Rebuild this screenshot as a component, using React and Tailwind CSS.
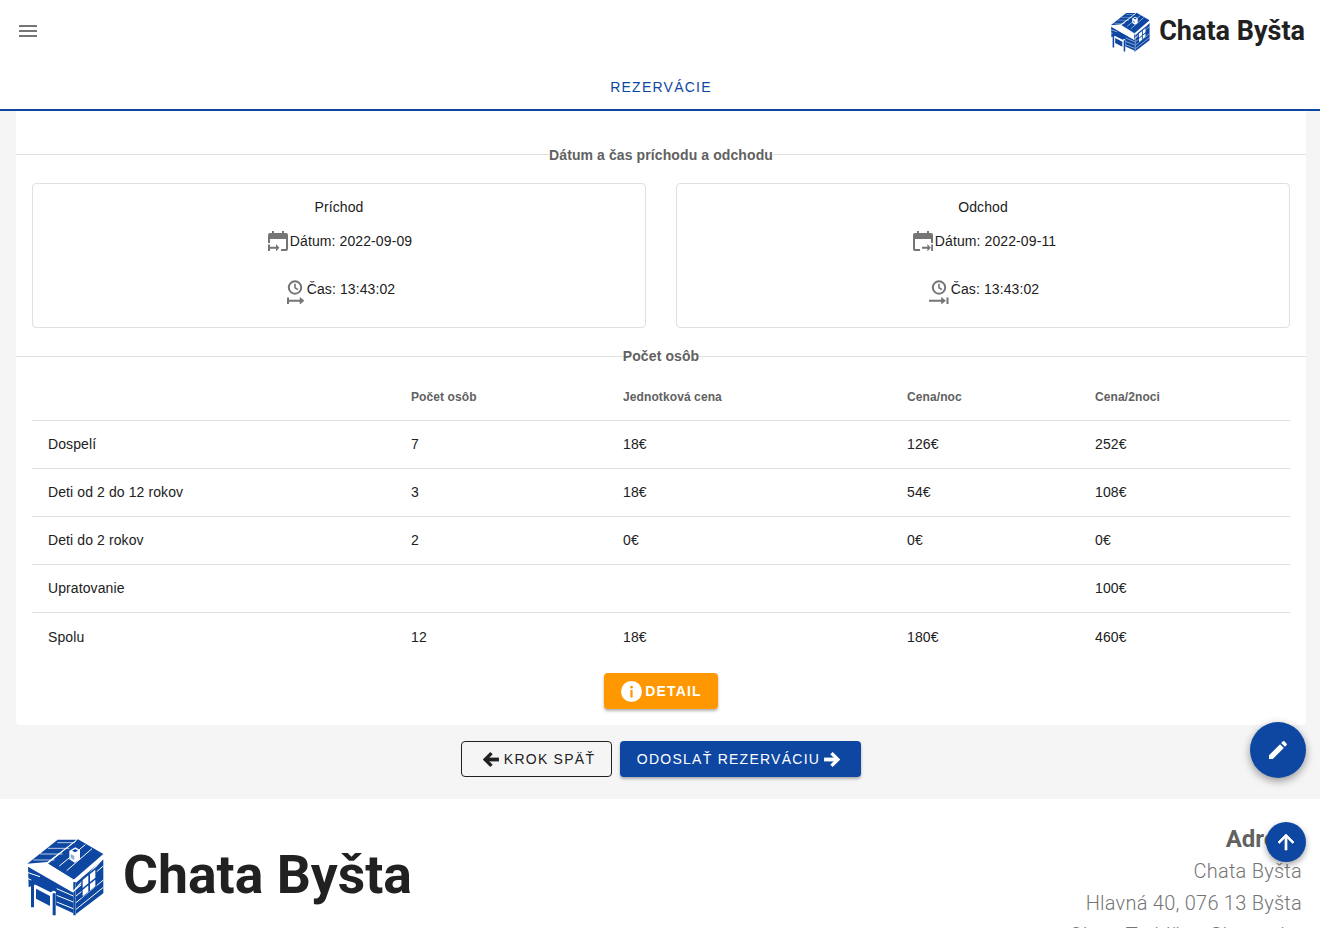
import React from "react";

const sans = "font-['Liberation_Sans',Arial,sans-serif]";
const roboto = "font-['Roboto',sans-serif]";

const rows = [
  { name: "Dospelí", count: "7", unit: "18€", night: "126€", total: "252€" },
  { name: "Deti od 2 do 12 rokov", count: "3", unit: "18€", night: "54€", total: "108€" },
  { name: "Deti do 2 rokov", count: "2", unit: "0€", night: "0€", total: "0€" },
  { name: "Upratovanie", count: "", unit: "", night: "", total: "100€" },
  { name: "Spolu", count: "12", unit: "18€", night: "180€", total: "460€" },
];

// the cabin logo, drawn on a 270 grid
const Logo = ({ className }) => (
  <svg viewBox="0 0 270 270" className={className}>
    <path fill="#0d47a1" d="M22 101 113 29H170L82 96Z" />
    <path fill="#0d47a1" d="M174 28 250 72 160 150 84 101Z" />
    <path fill="#0d47a1" d="M24 110 160 188V250L108 226V186L62 156 26 172Z" />
    <path fill="#0d47a1" d="M168 158 250 88V190L168 252Z" />
    <path fill="#0d47a1" d="M30 156 62 140 122 170 92 187Z" />
    <path fill="#0d47a1" d="M48 176 90 198V228L48 206Z" />
    <path fill="#0d47a1" d="M33 165H42V232H33ZM98 190H107V256H98ZM160 156H167V256H160Z" />
    <g stroke="#fff" strokeWidth="3" fill="none">
      <path d="M40 90H104M60 72H128M84 55H148M112 38H165" opacity=".7" />
      <path d="M168 32 80 100 162 150M196 44 118 108M216 56 140 122" />
      <path d="M22 104 160 184 252 82" strokeWidth="4" />
      <path d="M24 128 60 140M24 146 34 150M110 176 160 198M110 196 160 216M110 216 160 236" />
      <path d="M168 178 250 108M168 198 190 180M168 218 250 150M168 238 250 172" />
    </g>
    <path fill="#fff" d="M148 62 166 52 180 60V88L164 98 148 88Z" />
    <path fill="#0d47a1" d="M156 62 166 57 174 62 165 67Z" />
    <path fill="#0d47a1" d="M152 72 163 78V90L152 84Z" opacity=".45" />
    <path fill="#0d47a1" d="M184 146 230 110V168L184 204Z" />
    <path fill="#fff" d="M188 150 205 136V160L188 174ZM210 132 226 119V143L210 156ZM188 180 205 166V186L188 199ZM210 162 226 149V169L210 182Z" />
  </svg>
);

// calendar with a small arrow in its lower corner
const CalendarArrival = () => (
  <svg viewBox="0 0 20 20" className="w-5 h-5 shrink-0" fill="#757575">
    <path d="M4 0h2v2h8V0h2v2h2a2 2 0 0 1 2 2v4H0V4a2 2 0 0 1 2-2h2Z" />
    <path d="M0 8h2v4H0ZM18 8h2v10a2 2 0 0 1-2 2h-5v-2h5Z" />
    <path d="M0 13.5h2V20H0ZM2 15.7h6V13l3.4 3.7L8 20.4v-2.7H2Z" />
  </svg>
);

const CalendarDeparture = () => (
  <svg viewBox="0 0 20 20" className="w-5 h-5 shrink-0" fill="#757575">
    <path d="M4 0h2v2h8V0h2v2h2a2 2 0 0 1 2 2v4H0V4a2 2 0 0 1 2-2h2Z" />
    <path d="M0 8h2v10h5v2H2a2 2 0 0 1-2-2ZM18 8h2v4h-2Z" />
    <path d="M18.2 13.5h2V20h-2ZM9 15.7h5.4V13l3.4 3.7-3.4 3.7v-2.7H9Z" />
  </svg>
);

const ClockArrival = () => (
  <svg viewBox="0 0 20 24" className="w-5 h-6 shrink-0 translate-y-[3px]" fill="none" stroke="#757575">
    <circle cx="10" cy="7.5" r="6.2" strokeWidth="2" />
    <path d="M10 3.8v4l3 1.8" strokeWidth="1.6" />
    <path d="M3 17.5v6.5M3 20.7h13" strokeWidth="2" />
    <path d="M15 17.5v6.4l4-3.2Z" fill="#757575" strokeWidth="0.6" />
  </svg>
);

const ClockDeparture = () => (
  <svg viewBox="0 0 20 24" className="w-5 h-6 shrink-0 translate-y-[3px]" fill="none" stroke="#757575">
    <circle cx="10" cy="7.5" r="6.2" strokeWidth="2" />
    <path d="M10 3.8v4l3 1.8" strokeWidth="1.6" />
    <path d="M18.5 17.5v6.5M0 20.7h13" strokeWidth="2" />
    <path d="M12.5 17.5v6.4l4-3.2Z" fill="#757575" strokeWidth="0.6" />
  </svg>
);

const ThickArrow = ({ left }) => (
  <svg viewBox="0 0 16 16" className={left ? "w-[17px] h-[17px] rotate-180" : "w-[17px] h-[17px]"} fill="none" stroke="currentColor">
    <path d="M1 8h12" strokeWidth="3.6" />
    <path d="M8 2l6 6-6 6" strokeWidth="3.2" />
  </svg>
);

const Divider = ({ label, className, labelClass }) => (
  <div className={`flex items-center ${className}`}>
    <div className="flex-1 h-px bg-[#e0e0e0]" />
    <span className={`${sans} text-sm font-bold tracking-[0.1px] leading-4 text-[#616161] ${labelClass}`}>{label}</span>
    <div className="flex-1 h-px bg-[#e0e0e0]" />
  </div>
);

const TimeCard = ({ title, date, dateClass, DateIcon, TimeIcon }) => (
  <div className="w-[614px] h-[145px] rounded border border-[#e0e0e0] flex flex-col items-center pt-[15px] text-sm leading-4 text-[#212121] tracking-[0.1px]">
    <div>{title}</div>
    <div className={`flex items-center mt-[16px] h-5 gap-[2px] ${dateClass}`}>
      <DateIcon />
      <span>Dátum: {date}</span>
    </div>
    <div className="flex items-center mt-[26px] h-6 gap-[2px] pl-[2px]">
      <TimeIcon />
      <span>Čas: 13:43:02</span>
    </div>
  </div>
);

const App = () => {
  return (
    <div className={`h-screen overflow-hidden bg-white ${sans}`}>
      <header className="h-[111px] bg-white border-b-2 border-[#0d47a1]">
        <div className="h-[62px] flex items-center justify-between pl-[16px] pr-[15px]">
          <svg viewBox="0 0 24 24" className="w-6 h-6" fill="#757575">
            <path d="M3 18h18v-2H3v2zm0-5h18v-2H3v2zm0-7v2h18V6H3z" />
          </svg>
          <div className="flex items-center gap-[6px]">
            <Logo className="w-[46px] h-[46px]" />
            <span className={`${roboto} font-bold text-[27px] leading-8 text-[#212121]`}>Chata Byšta</span>
          </div>
        </div>
        <div className="text-center text-sm leading-4 tracking-[1.25px] text-[#0d47a1] mt-[17px] pl-[2px]">REZERVÁCIE</div>
      </header>

      <main className="bg-[#f5f5f5] pl-4 pr-[14px]">
        <section className="bg-white h-[614px] rounded-b pt-[35px]">
          <Divider label="Dátum a čas príchodu a odchodu" className="h-4" labelClass="translate-y-px" />
          <div className="flex justify-between px-4 mt-[21px]">
            <TimeCard title="Príchod" date="2022-09-09" dateClass="pl-[2px]" DateIcon={CalendarArrival} TimeIcon={ClockArrival} />
            <TimeCard title="Odchod" date="2022-09-11" dateClass="pl-[3px]" DateIcon={CalendarDeparture} TimeIcon={ClockDeparture} />
          </div>
          <Divider label="Počet osôb" className="h-4 mt-5" labelClass="" />
          <div className="px-4">
            <table className="w-full table-fixed text-sm text-[#212121] tracking-[0.1px]">
              <thead>
                <tr className="h-[56px] border-b border-[#e0e0e0] text-xs font-bold text-[#616161] text-left">
                  <th className="w-[363px]" />
                  <th className="w-[212px] pl-4 font-bold pt-[11px]">Počet osôb</th>
                  <th className="w-[284px] pl-4 font-bold pt-[11px]">Jednotková cena</th>
                  <th className="w-[188px] pl-4 font-bold pt-[11px]">Cena/noc</th>
                  <th className="pl-4 font-bold pt-[11px]">Cena/2noci</th>
                </tr>
              </thead>
              <tbody>
                {rows.map((row, i) => (
                  <tr key={row.name} className={i < rows.length - 1 ? "h-[48px] border-b border-[#e0e0e0]" : "h-[49px]"}>
                    <td className="pl-4">{row.name}</td>
                    <td className="pl-4">{row.count}</td>
                    <td className="pl-4">{row.unit}</td>
                    <td className="pl-4">{row.night}</td>
                    <td className="pl-4">{row.total}</td>
                  </tr>
                ))}
              </tbody>
            </table>
          </div>
          <div className="flex justify-center mt-[12px]">
            <button className={`${sans} w-[114px] h-[36px] pl-[1px] rounded bg-[#ff9800] text-white text-sm font-bold tracking-[1.15px] flex items-center justify-center gap-[3px] shadow-[0_2px_3px_rgba(0,0,0,0.3)]`}>
              <svg viewBox="0 0 21 21" className="w-[21px] h-[21px]">
                <circle cx="10.5" cy="10.5" r="10.5" fill="#fff" />
                <circle cx="10.5" cy="6.2" r="1.4" fill="#ff9800" />
                <path d="M9.4 9h2.2v7.5H9.4Z" fill="#ff9800" />
              </svg>
              DETAIL
            </button>
          </div>
        </section>

        <div className="h-[74px] flex items-start justify-center gap-2 pt-4">
          <button className={`${sans} w-[151px] h-9 pl-[5px] rounded border border-[#212121] text-[#212121] text-sm tracking-[1.25px] flex items-center justify-center gap-[4px]`}>
            <ThickArrow left />
            KROK SPÄŤ
          </button>
          <button className={`${sans} w-[241px] h-9 pr-[4px] rounded bg-[#0d47a1] text-white text-sm tracking-[1.25px] flex items-center justify-center gap-[3px] shadow-[0_2px_3px_rgba(0,0,0,0.3)]`}>
            ODOSLAŤ REZERVÁCIU
            <ThickArrow />
          </button>
        </div>
      </main>

      <footer className={`${roboto} bg-white h-[240px] flex justify-between pl-[20px] pr-[18px] pt-[31px]`}>
        <div className="flex items-start gap-[13px]">
          <Logo className="w-[90px] h-[90px]" />
          <span className="font-bold text-[53.5px] leading-[90px] text-[#212121]">Chata Byšta</span>
        </div>
        <div className="text-right text-[20px] leading-8 font-light tracking-[0.25px] text-[#757575] -mt-[7px]">
          <div className="text-2xl font-bold leading-8 tracking-normal text-[#616161]">Adresa</div>
          <div>Chata Byšta</div>
          <div>Hlavná 40, 076 13 Byšta</div>
          <div>Okres Trebišov, Slovensko</div>
        </div>
      </footer>

      <button className="fixed left-[1250px] top-[722px] w-14 h-14 rounded-full bg-[#0d47a1] flex items-center justify-center shadow-[0_3px_8px_rgba(0,0,0,0.4)]">
        <svg viewBox="0 0 24 24" className="w-6 h-6" fill="#fff">
          <path d="M3 17.25V21h3.75L17.81 9.94l-3.75-3.75L3 17.25zM20.71 7.04c.39-.39.39-1.02 0-1.41l-2.34-2.34c-.39-.39-1.02-.39-1.41 0l-1.83 1.83 3.75 3.75 1.83-1.83z" />
        </svg>
      </button>
      <button className="fixed left-[1266px] top-[822px] w-10 h-10 rounded-full bg-[#0d47a1] flex items-center justify-center shadow-[0_3px_6px_rgba(0,0,0,0.35)]">
        <svg viewBox="0 0 24 24" className="w-6 h-6" fill="#fff" stroke="#fff" strokeWidth="0.7">
          <path d="M4 12l1.41 1.41L11 7.83V20h2V7.83l5.58 5.59L20 12l-8-8-8 8z" />
        </svg>
      </button>
    </div>
  );
};

export default App;
